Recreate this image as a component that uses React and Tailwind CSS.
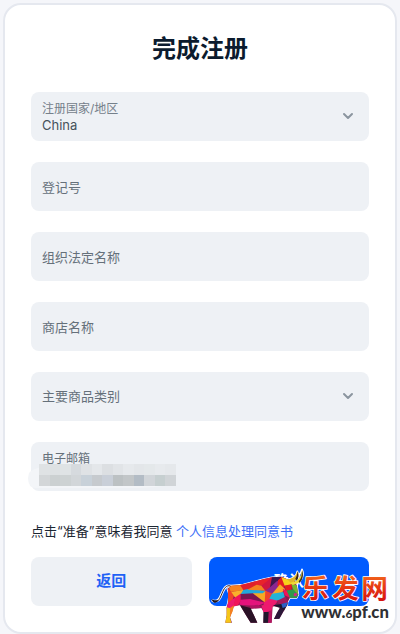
import { useState } from 'react'
import { ChevronDown } from 'lucide-react'

const MOSAIC_ROWS = [
  ['#dfe2e4', '#dde1e3', '#dfe3e5', '#d6dade', '#dfe2e5', '#e4e7ea', '#dcdfe2', '#e1e4e7', '#e6e9ec', '#e3e6e9', '#e4e8ea', '#e7eaed', '#e5e8eb'],
  ['#d3d6d8', '#cbd0d1', '#cdd2d3', '#d2d6d9', '#c8d1d9', '#c6cace', '#c9cfd8', '#bcc1c3', '#c2c6c8', '#b3bcc5', '#d1d5d9', '#c6cfd0', '#d0d4d7'],
]

const BULL_OUTLINE =
  'M82 116L94 107L130 104L158 96L192 87L216 82L244 80L262 88L284 92L291 108L295 134L290 144L270 143L262 158L262 164L252 182L246 192L238 206L222 207L232 187L240 173L218 168L215 218L190 219L191 186L184 174L150 176L161 194L172 218L152 218L138 196L120 166L102 168L96 184L90 202L96 218L76 218L80 196L80 172L84 158L88 134Z'

const BULL_FACETS = [
  // hind quarter
  { points: '86,112 94,107 130,104 132,120 92,126', color: '#f58220' },
  { points: '84,114 94,126 106,124 98,150 84,160', color: '#f0422c' },
  { points: '94,126 132,119 122,134 106,144', color: '#f9b02b' },
  { points: '84,158 98,148 108,142 102,166 94,182 80,176', color: '#ee1a6e' },
  { points: '106,142 124,130 124,150 114,166 100,170', color: '#f0145a' },
  { points: '80,172 96,176 92,192 90,202 94,218 76,218 80,196', color: '#f5c518' },
  { points: '90,174 102,166 98,184 90,202', color: '#f58220' },
  // back and ribs
  { points: '120,105 158,96 172,104 142,120 130,120', color: '#e0202a' },
  { points: '158,96 192,87 216,82 194,107 170,106', color: '#e8232b' },
  { points: '130,120 144,117 198,122 188,132 122,133', color: '#22a7dc' },
  { points: '142,119 170,104 186,107 198,122', color: '#f58220' },
  { points: '122,132 160,130 196,158 150,148 122,150', color: '#7a1650' },
  { points: '122,149 150,147 196,158 172,168 118,164', color: '#e4127c' },
  { points: '158,130 188,130 200,120 196,158', color: '#f7a823' },
  { points: '150,168 172,164 190,174 150,176', color: '#b01262' },
  // shoulder
  { points: '184,107 216,82 224,92 208,122 196,122', color: '#d2173f' },
  { points: '216,82 244,80 236,92 208,122', color: '#3b1650' },
  { points: '196,122 210,112 232,92 242,104 216,134', color: '#8a2690' },
  { points: '234,91 246,80 264,90 252,112 232,108', color: '#e31b23' },
  { points: '196,122 218,131 208,150 194,158', color: '#f0422c' },
  { points: '216,132 240,103 256,118 240,132', color: '#f9a62b' },
  { points: '206,150 216,131 250,126 256,146 226,154', color: '#23b3d8' },
  { points: '192,158 208,146 234,152 220,170 188,174', color: '#ee1a6e' },
  { points: '230,153 256,140 264,158 244,168', color: '#a3195b' },
  // head
  { points: '244,82 262,88 284,92 276,104 254,107', color: '#f6d21b' },
  { points: '254,107 276,102 274,120 258,124', color: '#e31b23' },
  { points: '274,102 290,106 295,134 280,122', color: '#76b82f' },
  { points: '258,122 280,118 295,134 290,144 268,143', color: '#2d9a4a' },
  { points: '248,116 260,122 270,143 254,136', color: '#f0145a' },
  { points: '282,130 292,130 289,139 281,137', color: '#d3208b' },
  // front legs
  { points: '184,166 218,164 214,186 191,188', color: '#ee1a6e' },
  { points: '200,186 215,180 215,218 204,218', color: '#b41560' },
  { points: '191,186 206,186 204,218 190,218', color: '#20172c' },
  { points: '218,166 244,162 264,160 252,182 240,173', color: '#1c1730' },
  { points: '240,173 252,180 246,192 238,206 222,207 232,187', color: '#2a1838' },
  { points: '244,162 263,157 258,170 248,174', color: '#2b5fc4' },
  // far hind leg
  { points: '120,166 152,174 160,192 172,218 152,218 138,196', color: '#2a1226' },
]

function Bull() {
  return (
    <g>
      <g fill="none" stroke="#fff" strokeLinejoin="round" strokeLinecap="round">
        <path d={BULL_OUTLINE} strokeWidth="5" />
        <path d="M92 108C78 104 72 116 66 130C60 146 54 158 38 152" strokeWidth="8" />
        <path d="M262 88C278 86 290 78 292 64L296 76C302 70 304 66 306 58C314 76 306 98 280 104" strokeWidth="5" />
      </g>
      <path d={BULL_OUTLINE} fill="#8a1b52" />
      {BULL_FACETS.map((facet) => (
        <polygon key={facet.points} points={facet.points} fill={facet.color} />
      ))}
      <path d="M92 108C78 104 72 116 66 130C60 146 54 158 42 155" fill="none" stroke="#3a2026" strokeWidth="3" />
      <path d="M34 147C40 152 46 150 56 151C48 162 38 160 34 147Z" fill="#1c1520" />
      <path d="M262 88C278 86 288 80 292 64C298 78 290 94 272 98Z" fill="#dfb52a" />
      <path d="M286 86C291 79 292 72 292 64C298 74 296 84 290 92Z" fill="#3a2418" />
      <path d="M272 99C292 94 304 82 306 60C313 78 304 102 278 105Z" fill="#efd93a" />
      <path d="M296 94C304 86 306 76 306 60C312 76 308 90 298 99Z" fill="#3a3020" />
    </g>
  )
}

function SiteMark() {
  return (
    <svg
      viewBox="30 42 543 189"
      className="pointer-events-none absolute top-[7px] -right-[22px] w-[181px]"
      aria-hidden="true"
    >
      <defs>
        <linearGradient id="flame" x1="0" y1="0" x2="0" y2="1">
          <stop offset="0.1" stopColor="#f5761f" />
          <stop offset="0.5" stopColor="#e83c14" />
          <stop offset="0.9" stopColor="#d40f0f" />
        </linearGradient>
      </defs>
      <Bull />
      <g
        className="font-['Noto_Sans_CJK_SC',sans-serif] text-[80px] font-bold"
        fill="url(#flame)"
        stroke="#fff"
        strokeWidth="5"
        strokeLinejoin="round"
        paintOrder="stroke"
      >
        <text x="306" y="144">乐</text>
        <text x="396" y="144">发</text>
        <text x="484" y="144">网</text>
      </g>
      <text
        x="304"
        y="204"
        className="font-[Lato,sans-serif] text-[50px] font-black"
        fill="#2f3033"
        stroke="#fff"
        strokeWidth="4"
        paintOrder="stroke"
      >
        www.<tspan fontSize="36">6</tspan>pf.cn
      </text>
    </svg>
  )
}

function EmailMosaic() {
  return (
    <svg viewBox="0 0 148 24" className="absolute top-[22px] -left-[3px] w-[148px]" aria-hidden="true">
      <path d="M10 4Q30 0 60 0H146V22H134Q120 24 100 24H8Q0 24 0 14Q0 6 10 4Z" fill="#f3f5f8" />
      {MOSAIC_ROWS.map((row, y) =>
        row.map((color, x) => (
          <rect
            key={`${x}-${y}`}
            x={11 + x * 10.5}
            y={y * 11}
            width="10.6"
            height="11"
            fill={color}
            shapeRendering="crispEdges"
          />
        ))
      )}
    </svg>
  )
}

function TextField({ id, label }) {
  return (
    <input
      id={id}
      aria-label={label}
      placeholder={label}
      className="block h-[49px] w-full rounded-lg bg-[#eef1f5] px-[11px] text-[13px] text-[#4d5862] outline-none placeholder:text-[#65707a]"
    />
  )
}

function Chevron() {
  return (
    <ChevronDown
      strokeWidth={3}
      className="pointer-events-none absolute top-4 right-[13px] size-4 text-[#8b959f]"
    />
  )
}

export default function App() {
  const [country, setCountry] = useState('China')
  const [category, setCategory] = useState('')
  const [email, setEmail] = useState('')

  return (
    <div className="min-h-screen bg-[#f5f6fa] px-[3px] pt-[3px] font-[Inter,'Noto_Sans_CJK_SC',sans-serif]">
      <form
        className="rounded-[18px] border-2 border-[#e5e8ef] bg-white px-[26px] pt-7 pb-[26px]"
        onSubmit={(e) => e.preventDefault()}
      >
        <h1 className="text-center text-2xl leading-8 font-bold text-[#0b1b2e]">完成注册</h1>

        <div className="mt-[27px] flex flex-col gap-[21px]">
          <div className="relative h-[49px] rounded-lg bg-[#eef1f5] pt-[9px]">
            <label htmlFor="country" className="block px-[11px] text-xs leading-4 text-[#75808a]">
              注册国家/地区
            </label>
            <select
              id="country"
              value={country}
              onChange={(e) => setCountry(e.target.value)}
              className="block w-full appearance-none px-[11px] text-[13px] leading-4 text-[#46515b] outline-none"
            >
              <option>China</option>
            </select>
            <Chevron />
          </div>

          <TextField id="reg-number" label="登记号" />
          <TextField id="legal-name" label="组织法定名称" />
          <TextField id="shop-name" label="商店名称" />

          <div className="relative">
            <select
              aria-label="主要商品类别"
              value={category}
              onChange={(e) => setCategory(e.target.value)}
              className="block h-[49px] w-full appearance-none rounded-lg bg-[#eef1f5] px-[11px] text-[13px] text-[#65707a] outline-none"
            >
              <option value="">主要商品类别</option>
            </select>
            <Chevron />
          </div>

          <div className="relative h-[49px] rounded-lg bg-[#eef1f5] pt-[9px]">
            <label htmlFor="email" className="block px-[11px] text-xs leading-4 text-[#65707a]">
              电子邮箱
            </label>
            <input
              id="email"
              type="email"
              value={email}
              onChange={(e) => setEmail(e.target.value)}
              className="block w-full px-[11px] text-[13px] leading-4 text-[#46515b] outline-none"
            />
            <EmailMosaic />
          </div>
        </div>

        <p className="mt-8 text-[13px] leading-4 text-[#1c2733]">
          点击“准备”意味着我同意{' '}
          <a href="#consent" className="text-[#3d6ff8]">个人信息处理同意书</a>
        </p>

        <div className="relative mt-[18px] grid grid-cols-2 gap-[17px]">
          <button type="button" className="h-[49px] rounded-lg bg-[#eef1f5] text-[15px] font-bold text-[#1f62f5]">
            返回
          </button>
          <button type="submit" className="h-[49px] rounded-lg bg-[#005bff] text-[15px] font-bold text-white">
            确认
          </button>
          <SiteMark />
        </div>
      </form>
    </div>
  )
}
